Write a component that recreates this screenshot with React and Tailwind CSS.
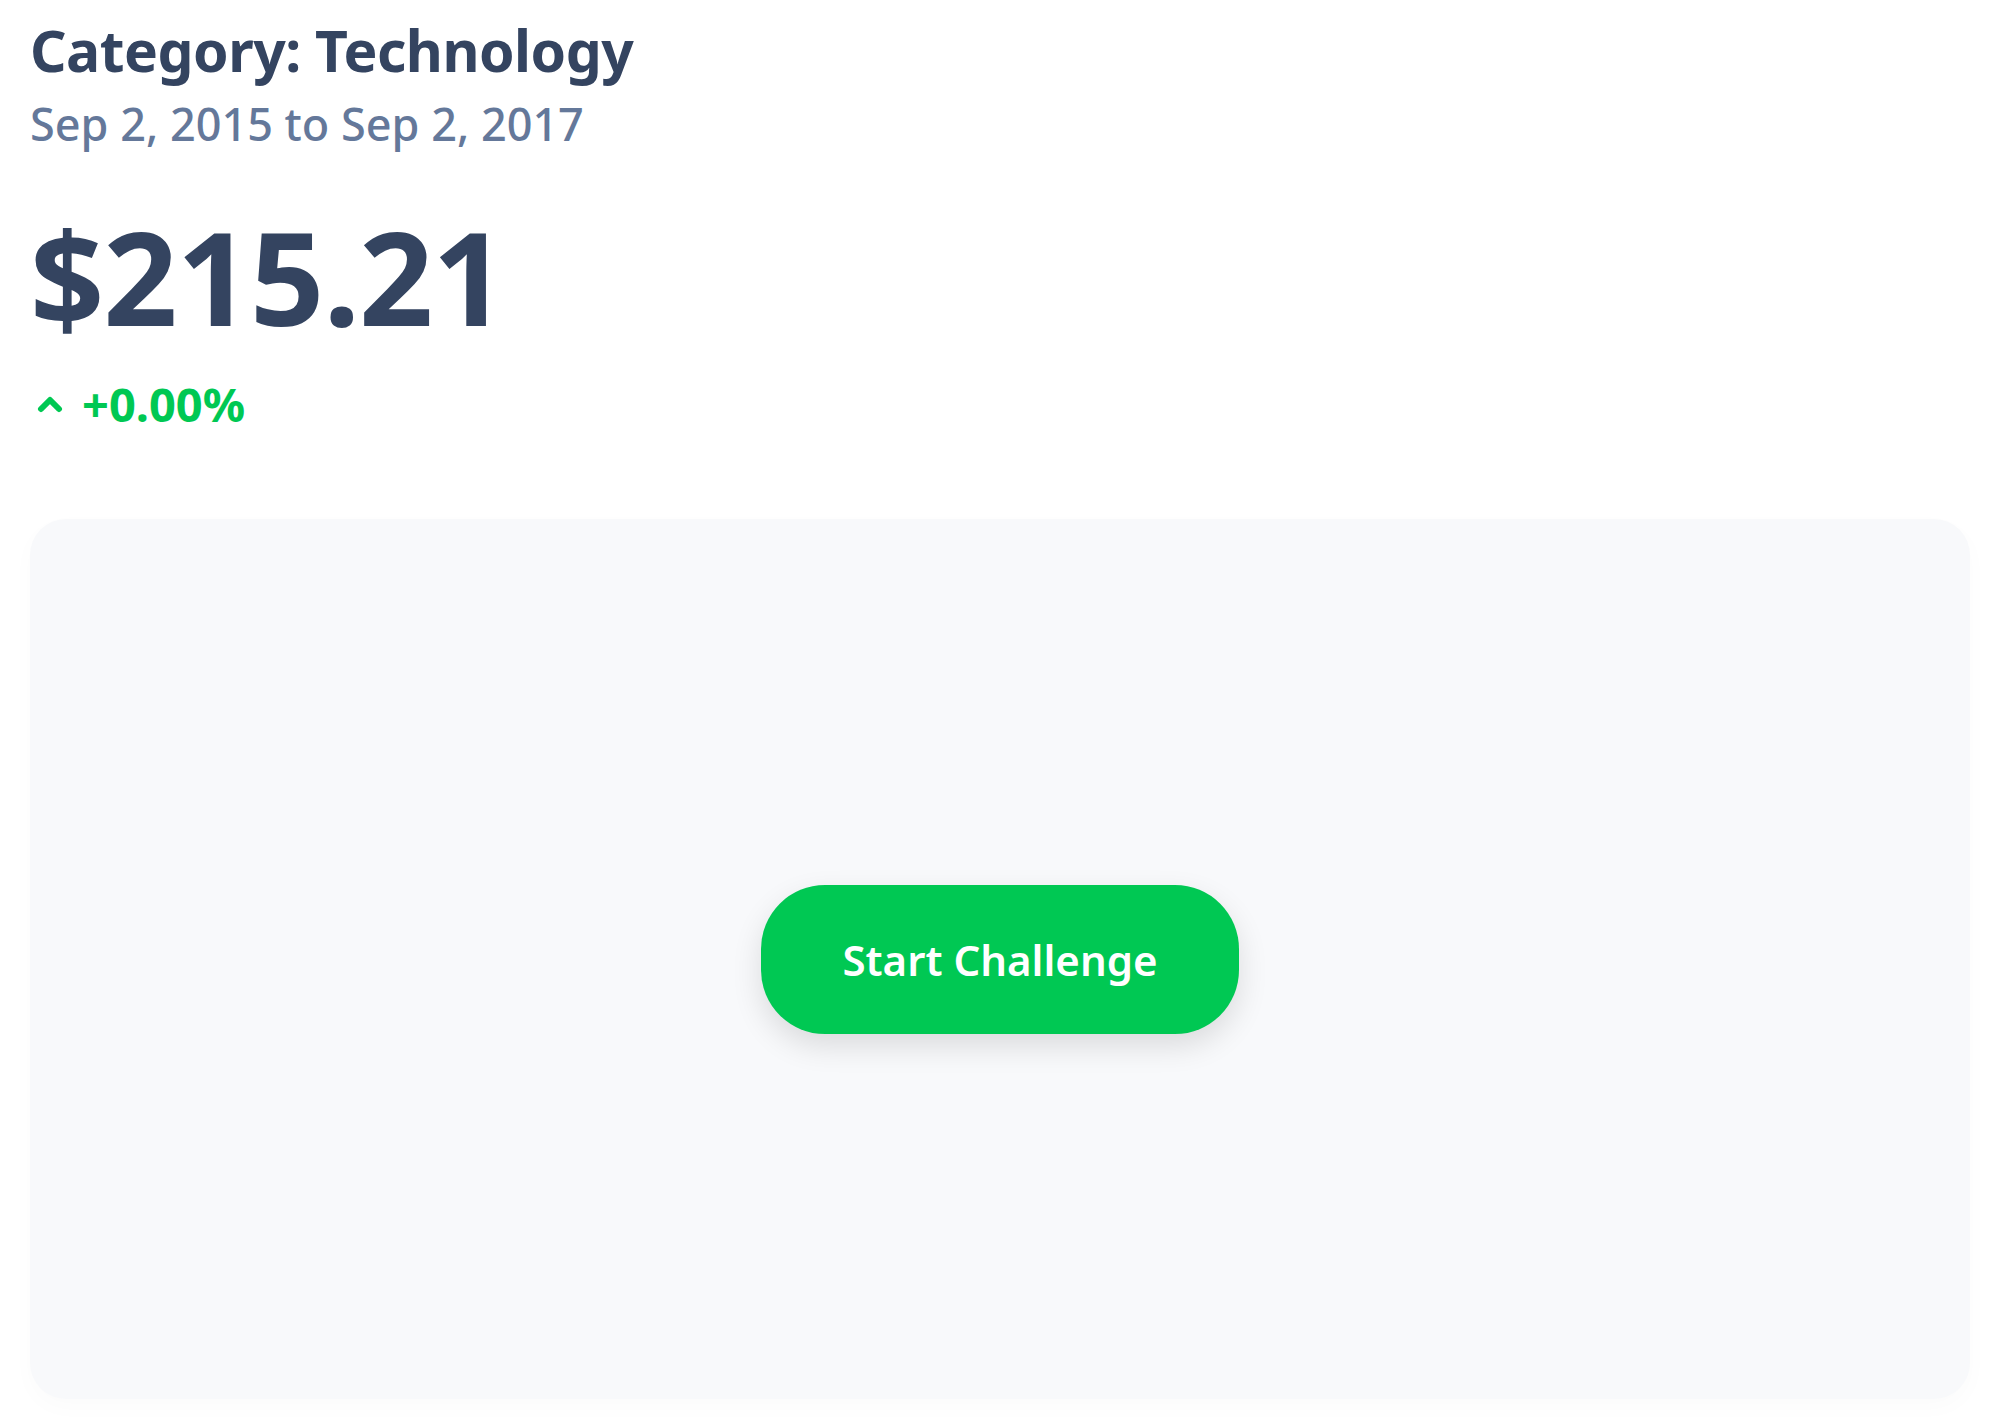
import React from 'react';

function ChevronUp() {
  return (
    <svg width="26" height="18" viewBox="0 0 26 18" fill="none">
      <polyline
        points="4,14 13,5 22,14"
        stroke="#00c853"
        strokeWidth="6"
        strokeLinecap="round"
        strokeLinejoin="round"
      />
    </svg>
  );
}

export default function App() {
  return (
    <div
      className="min-h-screen bg-white pl-[30px] pr-[20px] pb-[28px] text-[#344460]"
      style={{ fontFamily: '"Noto Sans", Inter, sans-serif' }}
    >
      <div className="pt-[16px]">
        <h1 className="text-[57px] leading-[68px] font-bold tracking-[-0.5px]">Category: Technology</h1>
        <p className="mt-[12px] text-[45px] leading-[56px] font-medium text-[#64789a]">Sep 2, 2015 to Sep 2, 2017</p>
      </div>

      <div className="mt-[54px] text-[130px] leading-[140px] font-bold tracking-[-1px]">$215.21</div>

      <div className="mt-[30px] flex items-center gap-[19px] text-[#00c853]">
        <span className="ml-[7px]">
          <ChevronUp />
        </span>
        <span className="text-[47px] leading-[56px] font-bold">+0.00%</span>
      </div>

      <div className="mt-[87px] flex h-[880px] items-center justify-center rounded-[36px] bg-[#f8f9fb] shadow-[0_8px_24px_rgba(0,0,0,0.02)]">
        <button className="h-[149px] w-[478px] rounded-[64px] bg-[#00c853] text-[42px] font-semibold text-white shadow-[0_12px_30px_rgba(0,0,0,0.12)]">
          Start Challenge
        </button>
      </div>
    </div>
  );
}
